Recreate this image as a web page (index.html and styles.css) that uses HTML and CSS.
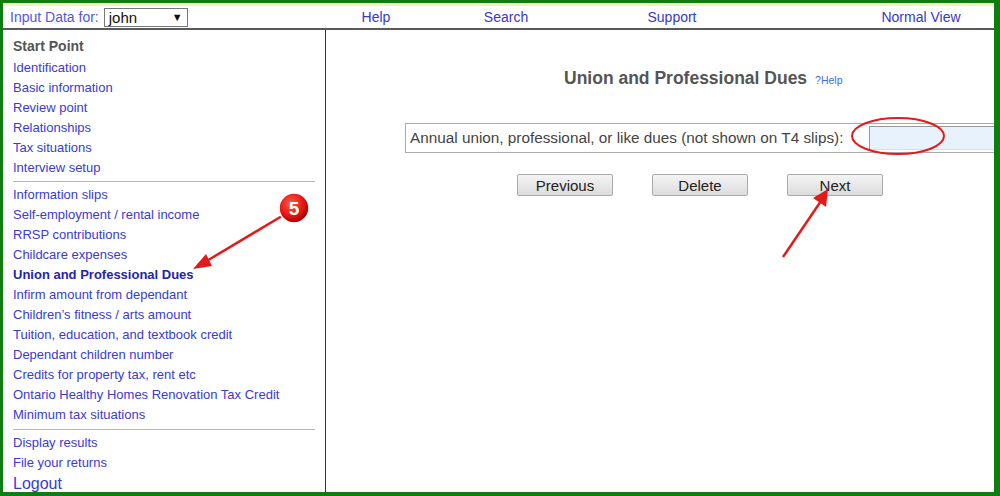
FILE: index.html
```html
<!DOCTYPE html>
<html lang="en">
<head>
    <meta charset="UTF-8">
    <title>Union and Professional Dues</title>
    <link rel="stylesheet" href="styles.css">
</head>
<body>
    <div class="frame">
        <div class="strip"></div>
        <div class="topbar">
            <div class="who">
                <span class="who-label">Input Data for:</span>
                <span class="who-select">john <span class="caret">&#9660;</span></span>
            </div>
            <a class="top-link" href="#">Help</a>
            <a class="top-link" href="#">Search</a>
            <a class="top-link" href="#">Support</a>
            <span></span>
            <a class="top-link" href="#">Normal View</a>
        </div>

        <div class="columns">
            <div class="sidebar">
                <div class="start">Start Point</div>
                <a href="#">Identification</a>
                <a href="#">Basic information</a>
                <a href="#">Review point</a>
                <a href="#">Relationships</a>
                <a href="#">Tax situations</a>
                <a href="#">Interview setup</a>
                <hr class="sep">
                <a href="#">Information slips</a>
                <a href="#">Self-employment / rental income</a>
                <a href="#">RRSP contributions</a>
                <a href="#">Childcare expenses</a>
                <a href="#" class="active">Union and Professional Dues</a>
                <a href="#">Infirm amount from dependant</a>
                <a href="#">Children’s fitness / arts amount</a>
                <a href="#">Tuition, education, and textbook credit</a>
                <a href="#">Dependant children number</a>
                <a href="#">Credits for property tax, rent etc</a>
                <a href="#">Ontario Healthy Homes Renovation Tax Credit</a>
                <a href="#">Minimum tax situations</a>
                <hr class="sep sep2">
                <a href="#">Display results</a>
                <a href="#">File your returns</a>
                <a href="#" class="logout">Logout</a>
            </div>

            <div class="main">
                <div class="title-row">
                    <span class="title">Union and Professional Dues</span>
                    <a class="help" href="#">?Help</a>
                </div>
                <div class="field-row">
                    <label for="dues">Annual union, professional, or like dues (not shown on T4 slips):</label>
                    <input type="text" id="dues">
                </div>
                <div class="buttons">
                    <button>Previous</button>
                    <button>Delete</button>
                    <button>Next</button>
                </div>
            </div>
        </div>

        <!-- callouts drawn over the screenshot -->
        <svg class="marks" width="1000" height="496" viewBox="0 0 1000 496">
            <defs>
                <radialGradient id="ball" cx="40%" cy="35%" r="65%">
                    <stop offset="0" stop-color="#ff5a4a"/>
                    <stop offset="0.7" stop-color="#e01010"/>
                    <stop offset="1" stop-color="#a00000"/>
                </radialGradient>
            </defs>
            <line x1="282" y1="216" x2="205" y2="262" stroke="#e41a1a" stroke-width="2.5"/>
            <polygon points="193,269 206,254 212,266" fill="#e41a1a"/>
            <circle cx="294" cy="208" r="15" fill="url(#ball)" stroke="#fff" stroke-width="1.5"/>
            <text x="294" y="215" text-anchor="middle" class="num">5</text>
            <ellipse cx="898" cy="136" rx="46" ry="18" fill="none" stroke="#e41a1a" stroke-width="2"/>
            <line x1="783" y1="257" x2="821" y2="201" stroke="#e41a1a" stroke-width="2.5"/>
            <polygon points="828,189 826,207 813,198" fill="#e41a1a"/>
        </svg>
    </div>
</body>
</html>
```

FILE: styles.css
```css
body {
    margin: 0;
    font-family: 'Liberation Sans', Arial, sans-serif;
    background: #fff;
}

.frame {
    position: relative;
    display: flex;
    flex-direction: column;
    width: 1000px;
    height: 496px;
    box-sizing: border-box;
    border-style: solid;
    border-color: #0f7d12;
    border-width: 3px 6px 4px 3px;
    overflow: hidden;
}

.strip {
    height: 3px;
    background: #f6f1b9;
}

.topbar {
    display: grid;
    grid-template-columns: 313px 120px 140px 192px 80px 146px;
    align-items: center;
    height: 22px;
    border-bottom: 2px solid #5a5a5a;
    font-size: 14px;
}

.who {
    display: flex;
    align-items: center;
    padding-left: 7px;
}

.who-label {
    color: #5656e0;
}

.who-select {
    display: flex;
    justify-content: space-between;
    align-items: center;
    width: 74px;
    height: 17px;
    margin-left: 5px;
    padding: 0 4px;
    border: 1px solid #777;
    color: #111;
    font-size: 15px;
}

.caret {
    font-size: 11px;
}

.top-link {
    text-align: center;
    color: #3838c4;
    text-decoration: none;
}

.columns {
    display: flex;
    flex: 1;
    min-height: 0;
}

.sidebar {
    flex-shrink: 0;
    width: 312px;
    padding: 6px 0 0 10px;
    border-right: 1px solid #333;
    display: flex;
    flex-direction: column;
    font-size: 13px;
}

.sidebar a {
    display: block;
    height: 20px;
    line-height: 20px;
    color: #3b3bcc;
    text-decoration: none;
}

.start {
    height: 20px;
    line-height: 20px;
    margin-bottom: 2px;
    font-size: 14px;
    font-weight: bold;
    color: #555;
}

.sidebar a.active {
    font-weight: bold;
    color: #2424a8;
}

.sidebar a.logout {
    font-size: 16px;
    height: 22px;
    line-height: 22px;
}

.sep {
    width: 302px;
    margin: 3px 0 3px 0;
    border: none;
    border-top: 1px solid #a6b4f2;
}

.sep2 {
    margin: 4px 0 3px 0;
}

.main {
    flex: 1;
    min-width: 0;
    padding-top: 38px;
}

.title-row {
    display: flex;
    align-items: baseline;
    padding-left: 238px;
}

.title {
    font-size: 17.5px;
    font-weight: bold;
    color: #555;
}

.help {
    margin-left: 8px;
    font-size: 10.5px;
    color: #3a6ee8;
    text-decoration: none;
}

.field-row {
    display: flex;
    align-items: center;
    width: 640px;
    height: 28px;
    margin: 34px 0 0 79px;
    border: 1px solid #aaa;
    font-size: 15.3px;
    color: #444;
}

.field-row label {
    padding-left: 4px;
    white-space: nowrap;
}

.field-row input {
    flex-shrink: 0;
    width: 130px;
    height: 20px;
    margin-left: 26px;
    border: 1px solid #999;
    border-right-color: #ddd;
    border-bottom-color: #ddd;
    background: #e8f2fd;
}

.buttons {
    display: flex;
    gap: 39px;
    margin: 21px 0 0 191px;
}

.buttons button {
    width: 96px;
    height: 22px;
    padding: 0;
    border: 1px solid #a9a9a9;
    border-radius: 2px;
    background: linear-gradient(#f4f4f4, #dcdcdc);
    font-family: 'Liberation Sans', Arial, sans-serif;
    font-size: 15px;
    color: #222;
}

.marks {
    position: absolute;
    left: -3px;
    top: -3px;
    pointer-events: none;
}

.num {
    font-family: 'Liberation Sans', Arial, sans-serif;
    font-size: 19px;
    font-weight: bold;
    fill: #fff;
}
```
